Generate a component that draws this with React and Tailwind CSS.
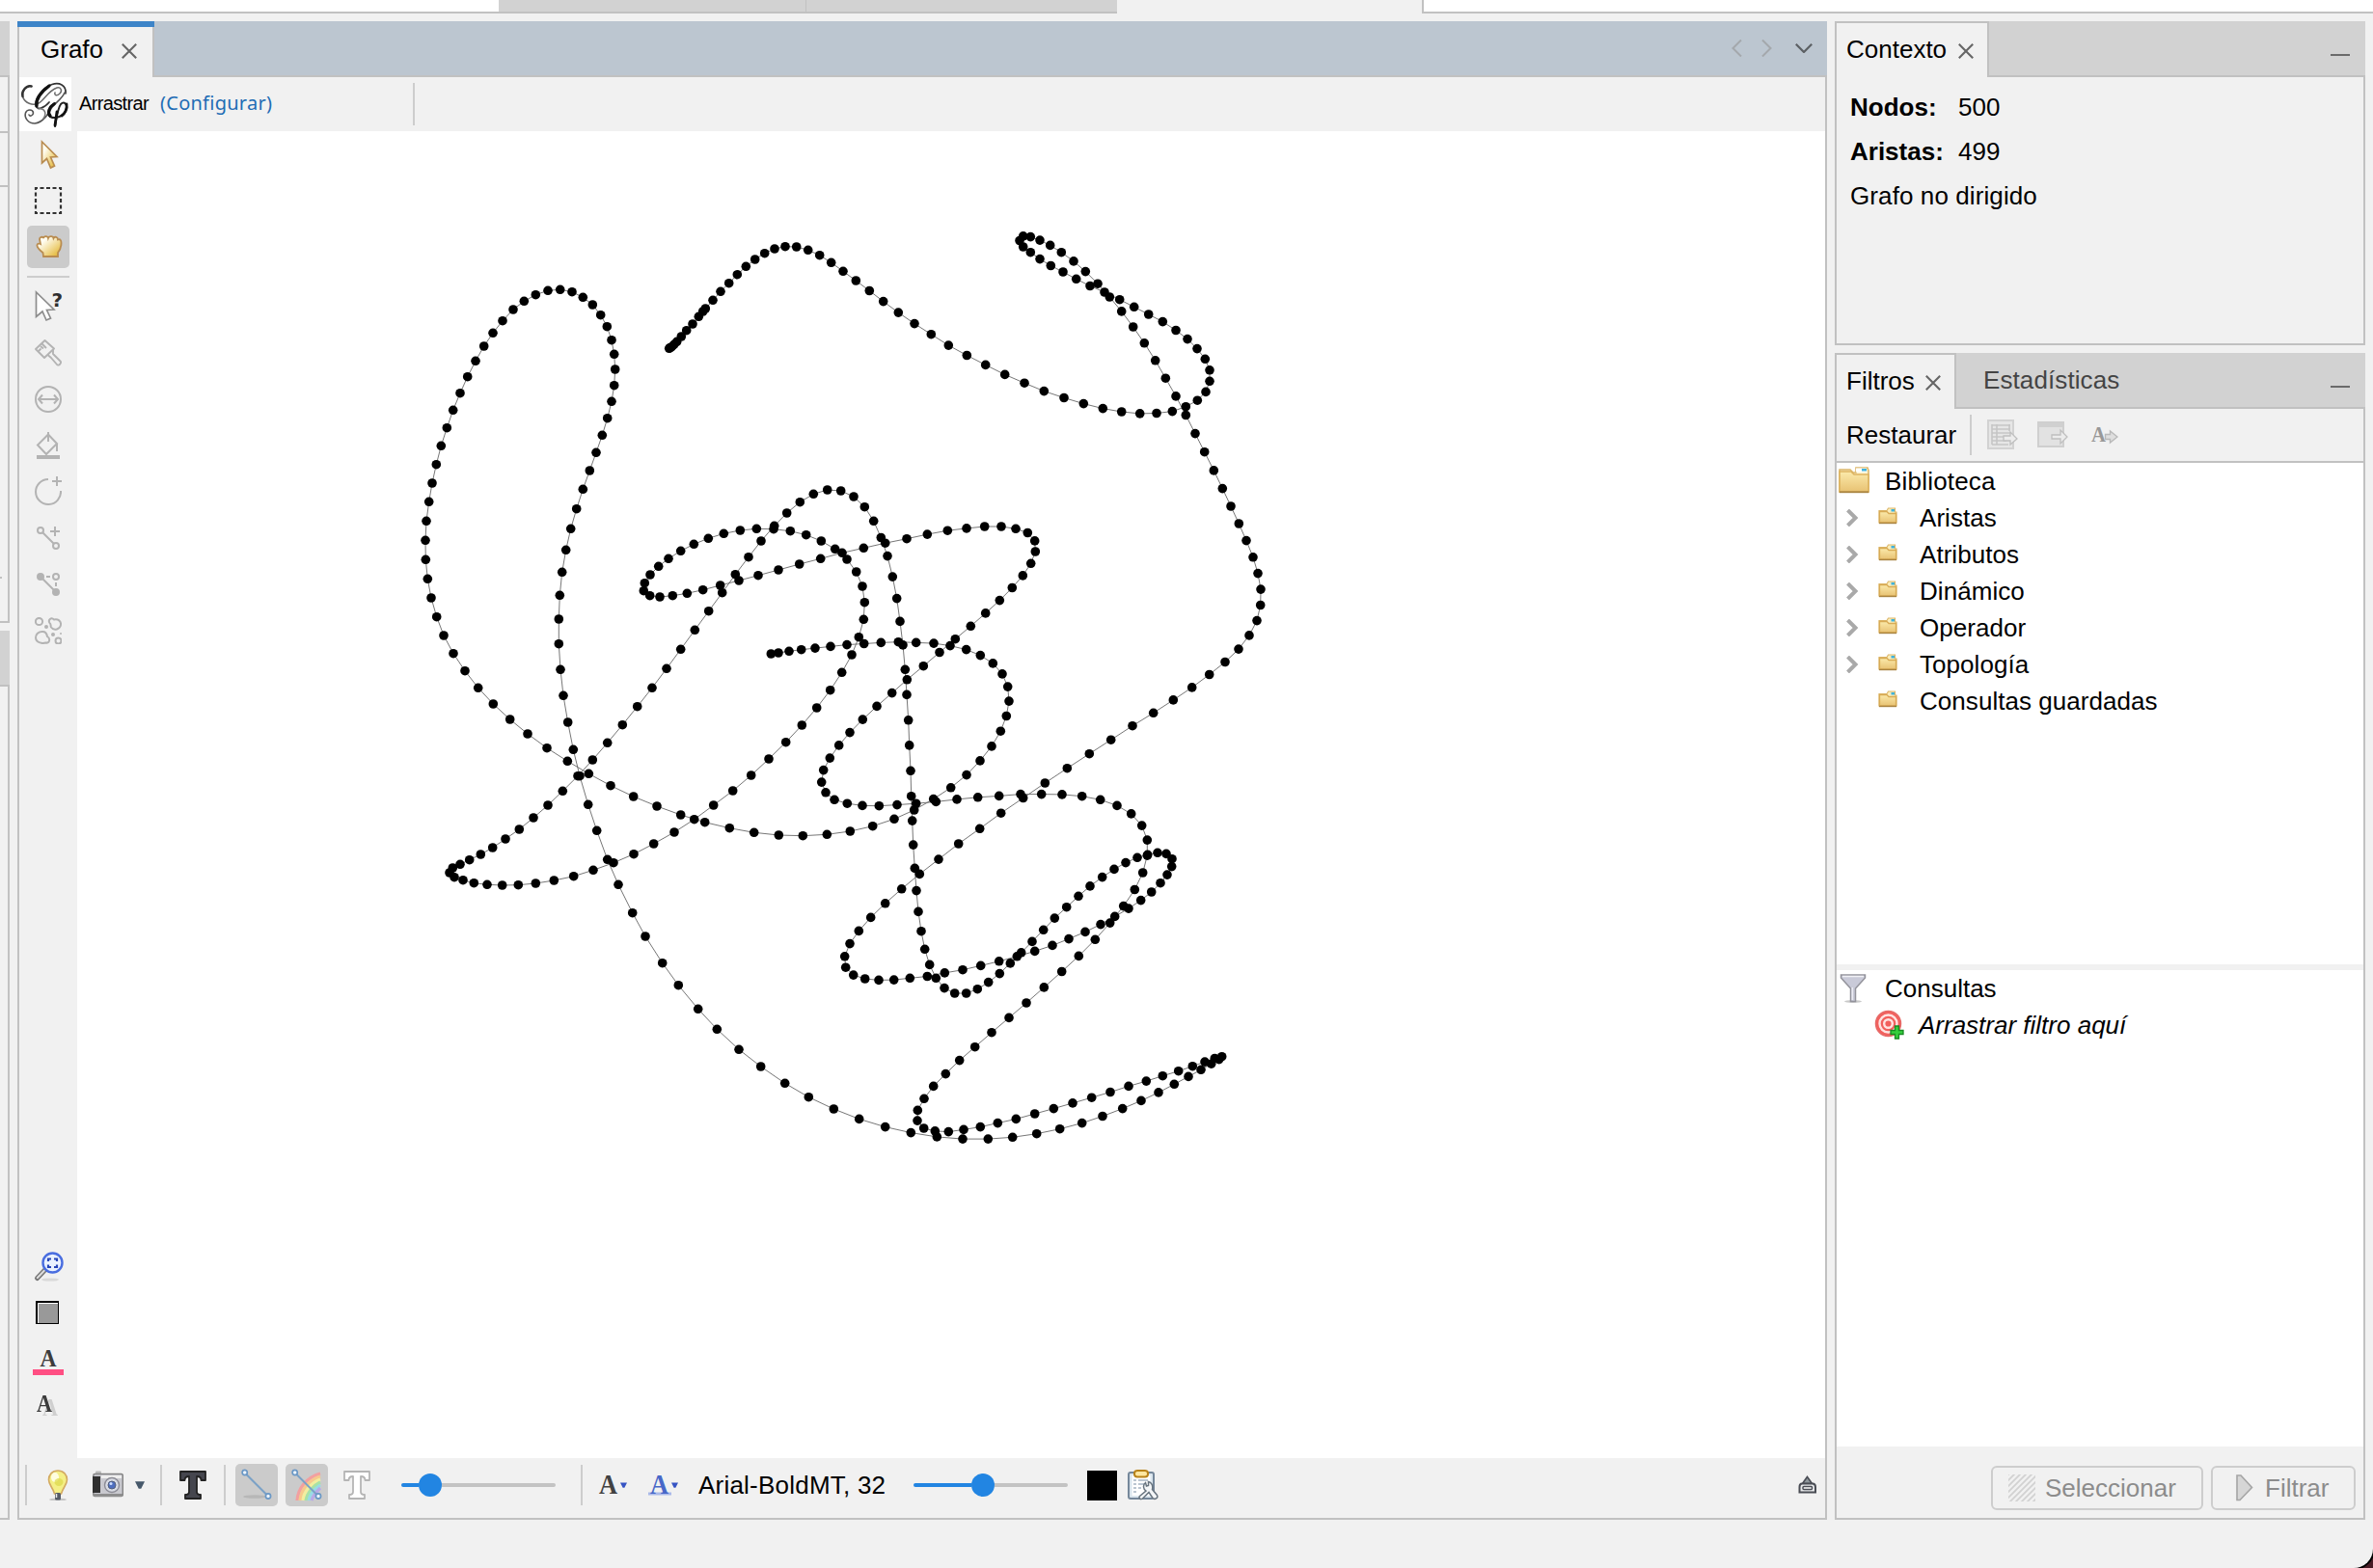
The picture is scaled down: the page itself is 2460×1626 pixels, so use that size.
import React from "react";

/* ---------- graph data: runs of nodes, each in the local units of its tile ---------- */
const TILES = {
  a: { x: 420, y: 220, sx: 3, sy: 3 },
  b: { x: 900, y: 220, sx: 3, sy: 2.6133 },
  c: { x: 420, y: 680, sx: 3, sy: 3 },
  d: { x: 840, y: 640, sx: 3, sy: 2.8 },
};

const RUNS = [
  ["a", "821,424 824,422 829,419 836,412 845,403 859,387 875,368 894,348 913,325 926,309 934,300 957,274 981,247 1007,221 1033,194 1060,169 1088,147 1118,128 1149,114 1182,107 1217,108 1253,118 1289,134 1325,157 1362,184 1402,213"],
  ["b", "4,213 47,242 94,272 144,302 196,331 250,361 307,388 365,414 425,440 486,463 547,485 609,503 670,519 730,532 788,541 845,546 897,545 946,540 988,527 1024,510 1050,487 1062,458 1062,428 1048,398 1023,370 993,344 957,320 916,297 872,277 827,257 782,237 735,217 690,200 647,181 606,162 568,145 534,127 505,109 482,94 471,77 482,65 505,67 534,76 566,90 601,109 639,133 676,161 714,194 751,230 788,269 824,311 859,355 893,402 925,450 957,499 988,550 1017,600 1046,650 1075,700 1102,749 1128,797 1153,844 1176,890 1197,935 1212,979 1221,1022 1220,1065 1209,1107 1185,1147 1152,1184 1110,1219 1061,1253 1007,1288 949,1322 887,1357 822,1392 755,1430 688,1468 619,1507 550,1547"],
  ["d", "662,525 593,569 527,614 461,658 399,703 340,746 284,789 233,831 188,872 151,911 123,948 107,985 110,1017 134,1039 170,1050 213,1054 260,1053 310,1048 364,1043 418,1033 474,1024 530,1012 587,999 643,985 698,970 753,953 804,934 855,914 903,892 947,869 990,846 1028,822 1061,798 1089,772 1110,748 1124,724 1125,702 1107,687 1080,684 1049,690 1017,698 981,713 945,732 908,755 870,781 834,810 797,842 760,874 725,908 690,942 656,974 622,1005 589,1035 554,1060 520,1080 485,1092 449,1092 417,1077 391,1048 371,1009 356,964 345,912 336,855 330,794 325,729 320,661 317,591 314,520 312,446 308,372 305,299 300,225 295,152 288,81"],
  ["b", "99,1109 89,1047 76,988 60,932 40,882 17,837"],
  ["a", "1429,917 1395,885 1355,867 1313,864 1270,877 1228,902 1187,936 1148,976 1107,1023 1068,1073 1027,1127 986,1184 944,1241 901,1300 857,1360 813,1420"],
  ["c", "768,100 722,158 676,215 629,271 583,324 537,374 490,421 444,465 399,504 355,540 312,570 272,597 235,618 200,635 171,649 148,660 138,675 153,689 180,698 214,707 255,712 302,714 352,713 406,708 463,699 524,686 585,667 648,644 711,617 773,585 837,549 899,509 959,465 1019,420 1076,372 1131,321 1184,269 1234,216 1280,162 1322,107 1358,52"],
  ["a", "1389,1377 1411,1322 1426,1267 1429,1214 1422,1164 1403,1119 1374,1080 1337,1048 1294,1023 1247,1004 1198,992 1146,986 1093,985 1042,990 991,1000 943,1015 898,1033 857,1054 819,1078 788,1102 762,1128 745,1154 742,1178 761,1193 792,1197 832,1193 877,1186 926,1175 980,1161 1038,1146 1098,1130 1161,1113 1226,1095 1292,1078 1359,1060 1426,1045"],
  ["b", "53,897 120,885 184,873 247,863 306,857 362,852 414,852 459,858 496,869 518,891 520,920 506,952 481,985 448,1018 409,1052 365,1087 319,1122 271,1157 222,1193 172,1230 121,1267 74,1303 27,1339"],
  ["d", "163,297 123,335 89,372 61,409 41,444 35,479 48,509 75,530 115,541 162,547 214,548 270,545 329,541 391,536 456,529 521,523 587,519 654,514 719,514 783,515 845,520 902,530 954,547 998,571 1031,605 1048,647 1048,692 1034,742 1009,791 974,839 932,888 886,936 835,984 782,1029 727,1075 672,1120 618,1163 564,1206 512,1248 464,1287 421,1326 383,1362 354,1398 334,1432 333,1462 353,1484 388,1492 430,1494 477,1488 529,1480 583,1469 640,1457 698,1442 757,1427 816,1411 875,1395 933,1379 990,1362 1045,1347 1096,1332 1145,1318 1189,1304 1227,1291 1258,1281 1280,1276 1271,1284 1247,1297 1215,1314 1176,1334 1132,1356 1083,1380 1029,1404 971,1427 909,1449 845,1469 776,1486 704,1500 629,1510 553,1515 474,1515 394,1509 313,1497 233,1480 152,1457 73,1428"],
  ["c", "1255,1373 1181,1330 1106,1278 1038,1225 970,1162 911,1099 850,1025 800,956 747,873 707,800 663,712 629,634 596,544 569,463 543,374 523,292 506,207 492,124 483,43"],
  ["a", "478,1343 478,1266 481,1192 488,1120 500,1051 515,985 533,923 553,862 574,804 594,748 613,694 629,641 642,589 650,539 653,489 650,442 642,398 628,356 608,320 583,288 553,265 519,248 482,241 444,244 406,257 370,277 336,303 303,338 273,376 245,417 219,463 194,512 171,563 149,616 130,671 112,727 97,785 84,843 74,901 66,961 63,1021 64,1081 70,1141 81,1200 98,1259 120,1317 150,1373 186,1427"],
  ["c", "227,100 274,150 326,198 381,243 441,287 505,328 571,367 639,404 710,438 783,468 857,495 932,518 1009,536 1085,550 1162,558 1237,560 1312,556 1384,546 1454,530 1521,508"],
  ["d", "323,560 383,528 437,495 486,458 528,417 564,375 592,331 610,287 618,244 614,202 597,165 568,134 529,111 485,94 435,83 384,76 329,74 274,72 220,74 167,77 114,80 63,85 15,90"],
  ["a", "1232,1361 1194,1366 1161,1371 1138,1374"],
];

const NODES = RUNS.flatMap(([key, run]) => {
  const t = TILES[key];
  return run.split(" ").map((p) => {
    const [x, y] = p.split(",").map(Number);
    return [t.x + x / t.sx, t.y + y / t.sy];
  });
});

function GraphCanvas() {
  return (
    <svg viewBox="80 136 1812 1376" className="block h-[1376px] w-[1812px] bg-white">
      <polyline
        points={NODES.map(([x, y]) => `${x.toFixed(1)},${y.toFixed(1)}`).join(" ")}
        fill="none"
        stroke="#666"
        strokeWidth="0.9"
      />
      {NODES.map(([x, y], i) => (
        <circle key={i} cx={x.toFixed(1)} cy={y.toFixed(1)} r="4.8" fill="#000" />
      ))}
    </svg>
  );
}

/* ---------- small drawings ---------- */
function Icon({ w = 32, h = 32, className = "", children, box }) {
  return (
    <svg width={w} height={h} viewBox={box || `0 0 ${w} ${h}`} className={"block shrink-0 " + className} fill="none">
      {children}
    </svg>
  );
}

const CloseX = ({ className = "" }) => (
  <Icon w={16} h={16} className={className}>
    <path d="M0.8 0.8 15.2 15.2M15.2 0.8 0.8 15.2" stroke="#666" strokeWidth="2.1" />
  </Icon>
);

const Minimize = () => <div className="h-[2px] w-[20px] bg-[#6a6a6a]" />;

const Logo = () => (
  <Icon w={54} h={56}>
    <g strokeLinecap="round" fill="none">
      <path d="M13 9.500C7 8 2 15 3.500 20C5.500 27 14 30 20 27C26 24 30 14 39 11C43 10 45 14 42 17C39 20 36 19 37 16" stroke="#6a6a6a" strokeWidth="1.500" />
      <path d="M12.500 9.500C7 8 2 15 3.500 20" stroke="#333" strokeWidth="2.400" />
      <path d="M48 17C49 8 41 5 34 7.500C24 11 16 22 17 29C18 35 26 32 31 26" stroke="#333" strokeWidth="1.700" />
      <path d="M31 9C23 15 17 23 18 30" stroke="#111" strokeWidth="3.200" />
      <path d="M47 16C44 23 38 26 34 31C30 38 25 47 16 48C9 48 5 42 6.500 37C8 33 14 33 14.500 37C14.500 40 11 41 10 39" stroke="#555" strokeWidth="1.600" />
      <path d="M20 33C26 32 29 37 25 43" stroke="#777" strokeWidth="1.500" />
      <path d="M37 27C31 30 28 38 32 41C38 44 47 40 49 33C50 27 46 25 43 28C40 32 39 40 37 51" stroke="#222" strokeWidth="2" />
      <path d="M36 28C31 31 29 37 32 40" stroke="#111" strokeWidth="3.200" />
      <path d="M49 28C50 33 47 38 44 40M39 36L37 50" stroke="#111" strokeWidth="2.800" />
    </g>
  </Icon>
);

const Pointer = () => (
  <Icon w={32} h={32} className="ml-px">
    <defs>
      <linearGradient id="gold" x1="0" y1="0" x2="1" y2="1">
        <stop offset="0.25" stopColor="#fffdf2" />
        <stop offset="1" stopColor="#e0ae1c" />
      </linearGradient>
    </defs>
    <path d="M8.5 3V25L13.5 20.5L17.5 30L21.5 28L17.5 19L24 18.5Z" fill="url(#gold)" stroke="#b98c50" strokeWidth="1.7" />
  </Icon>
);

const Marquee = () => (
  <Icon w={30} h={30}>
    <rect x="2" y="2" width="26" height="26" stroke="#333" strokeWidth="2.2" strokeDasharray="4 2.5" strokeDashoffset="2" />
  </Icon>
);

const Hand = () => (
  <Icon w={32} h={32} className="ml-[2px]">
    <path d="M10 26L9.5 22C7 20 3 17 3.5 14C4 12 6 12.500 7 13L6 8C6 5.500 9.500 5 10 7C10.500 4.500 14.500 4.500 15 7C16 4.500 20 4.500 20.500 7C21.500 5 25 5.500 25 8.500C28 7.500 28.500 10 28.500 12C28.500 16 27.500 19 25 22V26Z" fill="url(#gold)" stroke="#b98c50" strokeWidth="1.8" />
  </Icon>
);

const Help = () => (
  <Icon w={32} h={36} className="-mt-[4px]">
    <path d="M3.500 5V30.500L10 25L14 34L18.500 32L14.500 23.500L22 23Z" fill="#fff" stroke="#8d8d8d" strokeWidth="1.700" />
    <text x="19.500" y="20" fontFamily="DejaVu Sans" fontWeight="700" fontSize="20" fill="#2f2f2f">?</text>
  </Icon>
);

const Brush = () => (
  <Icon w={28} h={28}>
    <g stroke="#b3b3b3" strokeWidth="1.9" strokeLinejoin="round">
      <path d="M1 10L10.500 1L20 9.500L10 19Z" />
      <path d="M3.500 12.500L6.500 9.500M6 7L9 9.500M7.500 4.500L12 9M13.500 16L17 19L23 26C24.500 28 28.500 24.500 26.500 22.500L19 15V10" />
    </g>
  </Icon>
);

const Sizer = () => (
  <Icon w={28} h={28}>
    <circle cx="14" cy="14" r="13" stroke="#b3b3b3" strokeWidth="2" />
    <path d="M4.500 14H23.500M8 9.500L4 14L8 18.500M20 9.500L24 14L20 18.500" stroke="#b3b3b3" strokeWidth="2" />
  </Icon>
);

const Bucket = () => (
  <Icon w={28} h={28}>
    <path d="M14 2.500L23 12L12 23L3 13.500Z" stroke="#b3b3b3" strokeWidth="2" />
    <path d="M14 0V10M23 12V20" stroke="#b3b3b3" strokeWidth="2" />
    <rect x="2" y="24" width="24" height="4" fill="#b3b3b3" />
  </Icon>
);

const NodeAdd = () => (
  <Icon w={28} h={30} className="-mt-[2px]">
    <path d="M14 3A13 13 0 1 0 27 15" stroke="#b3b3b3" strokeWidth="2" />
    <path d="M23 0V10M18 5H28" stroke="#b3b3b3" strokeWidth="2" />
  </Icon>
);

const EdgeAdd = () => (
  <Icon w={24} h={24}>
    <g stroke="#b3b3b3" strokeWidth="2">
      <circle cx="4" cy="4" r="3" />
      <circle cx="20" cy="20" r="3" />
      <path d="M6 6L18 18M19 0V10M14 5H24" />
    </g>
  </Icon>
);

const PathTool = () => (
  <Icon w={24} h={24}>
    <g stroke="#b3b3b3" strokeWidth="2">
      <circle cx="4" cy="4" r="3" fill="#b3b3b3" />
      <circle cx="20" cy="20" r="3" fill="#b3b3b3" />
      <circle cx="20" cy="4" r="3" />
      <path d="M6 6L18 18M10 4H14M20 10V14" />
    </g>
  </Icon>
);

const Heatmap = () => (
  <Icon w={28} h={28}>
    <g stroke="#b3b3b3" strokeWidth="2">
      <circle cx="4.500" cy="4.500" r="3.600" />
      <circle cx="24.500" cy="24.500" r="3" />
      <path d="M15.500 6C13.500 3 17 -0.500 20 2.500C24 1.500 27.500 4 27 8C26.500 12.500 20 14.500 17 10.500C16 9 17.500 7.500 15.500 6Z" />
      <path d="M7 15C10.500 14.500 12.500 16.500 13 20C16.500 22 15.500 27.500 11.500 26.500C7 28 1 26 1 21C1 18 3.500 15.300 7 15Z" />
    </g>
    <circle cx="12" cy="10" r="2" fill="#b3b3b3" />
    <circle cx="19" cy="18" r="2" fill="#b3b3b3" />
    <circle cx="27" cy="17" r="1" fill="#b3b3b3" />
  </Icon>
);

const ZoomFit = () => (
  <Icon w={32} h={34} className="mt-[3px]">
    <ellipse cx="18" cy="30" rx="9" ry="1.600" fill="#d9d9d9" />
    <path d="M12.500 20L4.500 28.500" stroke="#777" strokeWidth="5" strokeLinecap="round" />
    <path d="M12 20.500L4.800 28" stroke="#dcdcdc" strokeWidth="2" strokeLinecap="round" />
    <circle cx="20.500" cy="12.500" r="10" fill="#eaf2ff" stroke="#4a6ee0" strokeWidth="2.400" />
    <path d="M16 11V8.500H19M22 8.500H25V11M25 14.500V17H22M19 17H16V14.500" stroke="#2846b8" strokeWidth="2.200" />
  </Icon>
);

const BgSquare = () => (
  <Icon w={24} h={24} className="mr-[2px] mt-[2px]">
    <rect x="0" y="0" width="24" height="24" fill="#000" />
    <rect x="2" y="2" width="21" height="21" fill="#fff" />
    <rect x="3" y="3" width="20" height="20" fill="#999" />
  </Icon>
);

const Letter = ({ x, y, size, fill, children, ...rest }) => (
  <text x={x} y={y} fontFamily="Liberation Serif" fontWeight="700" fontSize={size} fill={fill} {...rest}>{children}</text>
);

const LabelColor = () => (
  <Icon w={32} h={36}>
    <Letter x="7.500" y="27" size="26" fill="#3c3c3c" textLength="17" lengthAdjust="spacingAndGlyphs">A</Letter>
    <rect x="0" y="30" width="32" height="6" fill="#ff4f83" />
  </Icon>
);

const LabelShadow = () => (
  <Icon w={32} h={36}>
    <Letter x="4" y="26" size="25" fill="#3c3c3c" textLength="16" lengthAdjust="spacingAndGlyphs" className="drop-shadow-[6px_4px_0_#cfcfcf]">A</Letter>
  </Icon>
);

const Bulb = () => (
  <Icon w={32} h={32}>
    <ellipse cx="16" cy="31" rx="9" ry="1.500" fill="#c4c4c4" />
    <path d="M16 1C10 1 6.500 5.500 6.500 10.500C6.500 15.500 10.500 18 12.500 25H19.500C21.500 18 25.500 15.500 25.500 10.500C25.500 5.500 22 1 16 1Z" fill="#f4ef86" stroke="#d3aa62" strokeWidth="1.600" />
    <ellipse cx="13" cy="8" rx="4" ry="5" fill="#fffde0" />
    <ellipse cx="17" cy="13" rx="4.500" ry="4" fill="#dcd94a" opacity=".7" />
    <rect x="13" y="24" width="6" height="7.500" rx="1.500" fill="#555b66" />
    <path d="M14.500 25V29" stroke="#e8e8e8" strokeWidth="1.500" />
  </Icon>
);

const Camera = () => (
  <Icon w={32} h={32}>
    <rect x="3" y="1.500" width="6" height="4" rx="1" fill="#bbb" />
    <rect x="0.800" y="4.500" width="30.500" height="23" rx="1.500" fill="#c9c9cf" stroke="#868686" strokeWidth="1.500" />
    <rect x="0" y="7" width="8" height="17" fill="#303030" />
    <rect x="9" y="6" width="21" height="3" fill="#eee" />
    <circle cx="20" cy="16" r="7.500" fill="#d9dce4" stroke="#8c8c96" strokeWidth="1.400" />
    <circle cx="20" cy="16" r="4" fill="#4f6fc0" stroke="#55607a" strokeWidth="1" />
    <circle cx="19" cy="14.500" r="1.500" fill="#cfe0ff" />
    <rect x="1" y="25" width="30" height="3" fill="#8e8e8e" />
  </Icon>
);

const BigT = ({ fill, stroke }) => (
  <Icon w={32} h={32}>
    <path d="M3 2H29V11H24.500C24.500 8 23 7 20 7V23C20 25.500 22 26 24 26V30H8V26C10 26 12 25.500 12 23V7C9 7 7.500 8 7.500 11H3Z" fill={fill} stroke={stroke} strokeWidth="1.800" strokeLinejoin="round" />
  </Icon>
);

const EdgeIcon = ({ rainbow }) => (
  <Icon w={32} h={34}>
    {rainbow ? (
      <g strokeWidth="3.200">
        <path d="M6 33C7 20 16 9 30 5" stroke="#f2a0a0" />
        <path d="M9 33C10 22 18 12 30 8" stroke="#f7c98c" />
        <path d="M12 33C13 24 20 15 30 11" stroke="#f3ee9e" />
        <path d="M15 33C16 26 22 18 30 14" stroke="#a8e3a4" />
        <path d="M18 33C19 27 24 21 30 17" stroke="#98dbe6" />
        <path d="M21 33C22 29 26 24 30 20" stroke="#b9a9e6" />
      </g>
    ) : (
      <ellipse cx="14" cy="29" rx="12" ry="1.800" fill="#b7b7b7" />
    )}
    <path d="M4 4.500L28 28.500" stroke="#7ba1c6" strokeWidth="2" />
    <circle cx="3.700" cy="4" r="2.600" fill="#eef5fb" stroke="#6b98c6" strokeWidth="1.700" />
    <circle cx="28" cy="28.500" r="2.600" fill="#eef5fb" stroke="#6b98c6" strokeWidth="1.700" />
  </Icon>
);

const Caret = ({ color, w = 8, h = 6 }) => (
  <Icon w={w} h={h} box="0 0 8 6">
    <path d="M0 0H8L5 6H3Z" fill={color} />
  </Icon>
);

const FontA = ({ color, halo }) => (
  <Icon w={24} h={40} box="0 -8 24 40">
    {halo && <rect x="0" y="19.500" width="24" height="3" fill="#a9b9ea" />}
    <Letter x="2" y="21" size="29" fill={color} textLength="19" lengthAdjust="spacingAndGlyphs">A</Letter>
  </Icon>
);

const Clipboard = () => (
  <Icon w={32} h={32}>
    <rect x="1" y="3" width="26" height="27" rx="2" fill="#dbe6ee" stroke="#75879a" strokeWidth="2" />
    <rect x="4.500" y="6" width="19" height="21" fill="#fff" />
    <path d="M6 11H9M6 15H9M6 19H9M6 23H9M11 11H21M11 15H17M11 19H14" stroke="#a5b4c2" strokeWidth="1.600" />
    <rect x="7" y="1" width="14" height="6.500" rx="3" fill="#ffe7a0" stroke="#b98319" strokeWidth="2" />
    <path d="M18.500 13.500C15.500 16 16 20 19 22L12.500 27.500C11 29.500 13.500 31.500 15.500 30L22 23.500L26 29.500C28 31.500 32 29.500 30.500 26.500L25.500 20.500C26.500 16.500 24.500 13 21.500 12.500V16.500L19.500 17Z" fill="#f4f6f8" stroke="#68747f" strokeWidth="1.500" />
  </Icon>
);

const Eject = () => (
  <Icon w={20} h={20}>
    <path d="M9.500 1.500L14.500 8.500H4.500Z" fill="#8e979c" stroke="#4a4d55" strokeWidth="1.600" />
    <path d="M4 8.500H15C17.500 8.500 18 10 18 12V17.500H1.500V12C1.500 10 2 8.500 4 8.500Z" fill="#e6e8ea" stroke="#4a4d55" strokeWidth="2" />
    <rect x="5" y="11.500" width="9.500" height="3" rx="1" fill="#fff" stroke="#4a4d55" strokeWidth="1.500" />
  </Icon>
);

const FolderShape = () => (
  <g>
    <defs>
      <linearGradient id="folder" x1="0" y1="0" x2="0" y2="1">
        <stop offset="0" stopColor="#fbeaab" />
        <stop offset="1" stopColor="#e8c273" />
      </linearGradient>
    </defs>
    <path d="M1 3H12L15 6H18V1H30L31 4V26H1Z" fill="#fdf3cf" stroke="#dcb76a" strokeWidth="1.600" />
    <rect x="18" y="1.500" width="11" height="4" fill="#fff" />
    <rect x="24" y="2" width="5" height="2.500" fill="#3fb2dc" />
    <path d="M1 5H13L16 8H31V26H1Z" fill="url(#folder)" stroke="#ddb35f" strokeWidth="1.600" />
    <path d="M1 26.300H31" stroke="#a98442" strokeWidth="1.800" />
  </g>
);

const BigFolder = () => <Icon w={32} h={28} className="-mt-[2px]"><FolderShape /></Icon>;
const SmallFolder = () => (
  <Icon w={20} h={18} className="-mt-[3px]">
    <path d="M1 3.500H9L10.500 1H17.500V5H19V16H1Z" fill="#fbeebb" stroke="#dcb76a" strokeWidth="1.200" />
    <rect x="13.500" y="2" width="3.500" height="2.500" fill="#3fb2dc" />
    <path d="M1.500 4.500H9L11 6.500H18.500V16H1.500Z" fill="url(#folder)" stroke="#d8ab55" strokeWidth="1.300" />
    <path d="M1 16.500H19" stroke="#a98442" strokeWidth="1.400" />
  </Icon>
);

const Chevron = () => (
  <Icon w={13} h={18}>
    <path d="M1.500 1L9.500 9L1.500 17" stroke="#a9a9a9" strokeWidth="4" />
  </Icon>
);

const Funnel = () => (
  <Icon w={28} h={32}>
    <ellipse cx="14" cy="29.500" rx="9" ry="1.500" fill="#c9c9c9" />
    <path d="M1.500 2H26.500V5L16.500 16V29.500H11.500V16L1.500 5Z" fill="#c9cad8" stroke="#93939b" strokeWidth="1.500" />
    <path d="M3 3.500H25" stroke="#f1f1f5" strokeWidth="1.500" />
    <path d="M13.300 15V28" stroke="#ececf4" strokeWidth="1.500" />
  </Icon>
);

const Target = () => (
  <Icon w={32} h={32}>
    <circle cx="14.500" cy="14.500" r="13" fill="#f2605d" stroke="#e66a68" strokeWidth="1.500" />
    <circle cx="14.500" cy="14.500" r="9" stroke="#ffe4e2" strokeWidth="2.400" />
    <circle cx="14.500" cy="14.500" r="4.300" stroke="#ffe4e2" strokeWidth="2.400" />
    <path d="M21.500 17H25.500V21.500H30V25.500H25.500V30H21.500V25.500H17V21.500H21.500Z" fill="#35cf3d" stroke="#188a22" strokeWidth="1.300" />
  </Icon>
);

const ExportSheet = () => (
  <Icon w={32} h={32}>
    <rect x="1" y="1" width="26" height="29" fill="#e6e6e6" stroke="#d2d2d2" strokeWidth="2" />
    <path d="M5 6H24M5 10H24M5 14H24M5 18H20M5 22H20M5 26H22M5 5V26M10 5V26M23 5V12" stroke="#c6c6c6" strokeWidth="1.600" />
    <path d="M17 17H24V13L31 20L24 26V22H17Z" fill="#ececec" stroke="#bfbfbf" strokeWidth="1.300" />
  </Icon>
);

const ExportWindow = () => (
  <Icon w={32} h={32}>
    <rect x="1" y="3" width="26" height="25" fill="#e2e2e2" stroke="#cfcfcf" strokeWidth="2" />
    <rect x="2" y="4" width="24" height="4" fill="#d0d0d0" />
    <path d="M15 16H24V11L31 18L24 25V20H15Z" fill="#ececec" stroke="#bfbfbf" strokeWidth="1.300" />
  </Icon>
);

const ExportLabel = () => (
  <Icon w={32} h={32}>
    <Letter x="4" y="22.500" size="24" fill="#989898" textLength="15" lengthAdjust="spacingAndGlyphs">A</Letter>
    <path d="M18.500 15.500H23.500V12L31 18L23.500 24V20.500H18.500Z" fill="#dedede" stroke="#b9b9b9" strokeWidth="1.400" />
  </Icon>
);

const Hatch = () => (
  <Icon w={28} h={28}>
    <defs>
      <pattern id="hatch" width="6" height="6" patternUnits="userSpaceOnUse">
        <path d="M-1 7L7 -1M-1 1L1 -1M5 7L7 5" stroke="#d2d2d2" strokeWidth="1.800" />
      </pattern>
    </defs>
    <rect width="28" height="28" fill="url(#hatch)" />
  </Icon>
);

const Play = () => (
  <Icon w={18} h={28}>
    <path d="M1 1L5 1L16.500 13.500L4 26.500H1Z" fill="#d6d6d6" stroke="#a5a5a5" strokeWidth="1.600" />
  </Icon>
);

/* ---------- building blocks ---------- */
const ToolBtn = ({ active, children }) => (
  <div className={"flex h-[44px] w-[44px] shrink-0 items-center justify-center rounded-[5px] " + (active ? "bg-[#cbcbcb]" : "")}>
    {children}
  </div>
);

const VRule = ({ className = "" }) => <div className={"h-[42px] w-[2px] shrink-0 bg-[#cdcdcd] " + className} />;

function Slider({ value, className = "" }) {
  return (
    <div className={"flex h-[24px] w-[160px] shrink-0 items-center " + className}>
      <div className="h-[4px] rounded-l-full bg-[#2285e2]" style={{ width: value - 12 }} />
      <div className="h-[24px] w-[24px] shrink-0 rounded-full bg-[#2285e2]" />
      <div className="h-[4px] flex-1 rounded-r-full bg-[#c3c3c3]" />
    </div>
  );
}

const TreeRow = ({ label, open }) => (
  <div className="flex h-[38px] items-center pb-px pl-[10px]">
    <div className="w-[33px]">{open && <Chevron />}</div>
    <SmallFolder />
    <span className="ml-[23px] tracking-[0.05px]">{label}</span>
  </div>
);

function TopStrip() {
  return (
    <div className="flex h-[14px]">
      <div className="w-[517px] border-b-2 border-[#c1c1c1] bg-white" />
      <div className="w-[318px] border-b-2 border-[#c1c1c1] bg-[#d2d2d2]" />
      <div className="w-[323px] border-b-2 border-l border-[#c1c1c1] bg-[#d2d2d2]" />
      <div className="w-[316px] bg-[#f1f1f1]" />
      <div className="flex-1 border-b-2 border-l-2 border-[#c1c1c1] bg-white" />
    </div>
  );
}

function LeftSliver() {
  return (
    <div className="flex w-[10px] shrink-0 flex-col">
      <div className="h-[56px] bg-[#d2d2d2]" />
      <div className="flex h-[568px] flex-col border-y-2 border-r-2 border-[#c1c1c1]">
        <div className="h-[58px] border-b-2 border-[#c1c1c1]" />
        <div className="h-[56px] border-b-2 border-[#c1c1c1]" />
        <div className="mt-[404px] h-[2px] w-[2px] bg-[#c1c1c1]" />
      </div>
      <div className="mt-[8px] h-[56px] bg-[#d2d2d2]" />
      <div className="flex-1 border-y-2 border-r-2 border-[#c1c1c1]" />
    </div>
  );
}

function GraphPanel() {
  return (
    <div className="ml-[8px] flex w-[1876px] shrink-0 flex-col">
      <div className="flex h-[58px] bg-[#bcc6d0]">
        <div className="flex w-[142px] flex-col">
          <div className="h-[6px] bg-[#3d84c8]" />
          <div className="flex flex-1 items-center border-x-2 border-[#c1c1c1] bg-[#f1f1f1] pb-[6px] pl-[22px]">
            <span className="w-[66px]">Grafo</span>
            <CloseX className="ml-[18px] mt-[4px]" />
          </div>
        </div>
        <div className="flex flex-1 items-center justify-end border-b-2 border-[#c1c1c1] pr-[15px]">
          <Icon w={11} h={18}><path d="M10 0.500L1.500 9L10 17.500" stroke="#a4a8ac" strokeWidth="2" /></Icon>
          <Icon w={11} h={18} className="ml-[20px]"><path d="M1 0.500L9.500 9L1 17.500" stroke="#a4a8ac" strokeWidth="2" /></Icon>
          <Icon w={18} h={10} className="ml-[24px]"><path d="M0.800 0.800L9 9L17.200 0.800" stroke="#5c6064" strokeWidth="2.200" /></Icon>
        </div>
      </div>
      <div className="flex flex-1 flex-col border-x-2 border-b-2 border-[#c1c1c1]">
        <div className="flex h-[56px] items-center">
          <div className="h-[56px] w-[54px] bg-white"><Logo /></div>
          <span className="ml-[8px] w-[84px] pb-[2px] text-[20px] tracking-[-0.65px]">Arrastrar</span>
          <span className="w-[262px] pb-[2px] font-['Noto_Sans'] text-[20px] leading-[24px] tracking-[0.25px] text-[#1f6db5]">(Configurar)</span>
          <div className="h-[44px] w-[2px] bg-[#cdcdcd]" />
        </div>
        <div className="flex h-[1376px]">
          <div className="flex w-[60px] flex-col items-center gap-[4px] pt-[2px]">
            <ToolBtn><Pointer /></ToolBtn>
            <ToolBtn><Marquee /></ToolBtn>
            <ToolBtn active><Hand /></ToolBtn>
            <div className="my-[4px] h-[2px] w-[44px] shrink-0 bg-[#cdcdcd]" />
            <ToolBtn><Help /></ToolBtn>
            <ToolBtn><Brush /></ToolBtn>
            <ToolBtn><Sizer /></ToolBtn>
            <ToolBtn><Bucket /></ToolBtn>
            <ToolBtn><NodeAdd /></ToolBtn>
            <ToolBtn><EdgeAdd /></ToolBtn>
            <ToolBtn><PathTool /></ToolBtn>
            <ToolBtn><Heatmap /></ToolBtn>
            <div className="mt-auto flex flex-col items-center gap-[4px] pb-[34px]">
              <ToolBtn><ZoomFit /></ToolBtn>
              <ToolBtn><BgSquare /></ToolBtn>
              <ToolBtn><LabelColor /></ToolBtn>
              <ToolBtn><LabelShadow /></ToolBtn>
            </div>
          </div>
          <GraphCanvas />
        </div>
        <div className="flex h-[56px] items-center">
          <VRule className="ml-[6px]" />
          <div className="ml-[16px]"><Bulb /></div>
          <div className="ml-[20px]"><Camera /></div>
          <div className="ml-[12px]"><Caret color="#46586a" w={10} h={8} /></div>
          <VRule className="ml-[16px]" />
          <div className="ml-[16px]"><BigT fill="#45464e" stroke="#222" /></div>
          <VRule className="ml-[16px]" />
          <div className="ml-[10px] flex gap-[8px]">
            <ToolBtn active><EdgeIcon /></ToolBtn>
            <ToolBtn active><EdgeIcon rainbow /></ToolBtn>
          </div>
          <div className="ml-[14px]"><BigT fill="#fff" stroke="#b5b5b5" /></div>
          <Slider value={30} className="ml-[30px]" />
          <VRule className="ml-[26px]" />
          <div className="ml-[15px]"><FontA color="#424242" /></div>
          <Caret color="#3654c4" w={7} h={6} />
          <div className="ml-[22px]"><FontA color="#4868c8" halo /></div>
          <Caret color="#3654c4" w={7} h={6} />
          <span className="ml-[21px] w-[196px] whitespace-nowrap tracking-[0.22px]">Arial-BoldMT, 32</span>
          <Slider value={72} className="ml-[27px]" />
          <div className="ml-[20px] h-[31px] w-[31px] bg-black" />
          <div className="ml-[11px]"><Clipboard /></div>
          <div className="ml-auto mr-[8px]"><Eject /></div>
        </div>
      </div>
    </div>
  );
}

function ContextPanel() {
  return (
    <div className="flex h-[336px] flex-col">
      <div className="flex h-[58px] bg-[#d2d2d2]">
        <div className="flex w-[160px] items-center border-x-2 border-t-2 border-[#c1c1c1] bg-[#f1f1f1] pb-[2px] pl-[10px]">
          <span className="w-[105px]">Contexto</span>
          <CloseX className="ml-[11px] mt-[3px]" />
        </div>
        <div className="flex flex-1 items-center justify-end border-b-2 border-[#c1c1c1] pr-[16px] pt-[14px]"><Minimize /></div>
      </div>
      <div className="flex flex-1 flex-col border-x-2 border-b-2 border-[#c1c1c1] pl-[14px] pt-[8px] leading-[46px]">
        <div className="flex"><span className="w-[112px] font-bold">Nodos:</span><span>500</span></div>
        <div className="flex"><span className="w-[112px] font-bold">Aristas:</span><span>499</span></div>
        <div className="tracking-[0.1px]">Grafo no dirigido</div>
      </div>
    </div>
  );
}

function FiltersPanel() {
  return (
    <div className="mt-[8px] flex flex-1 flex-col">
      <div className="flex h-[58px] bg-[#d2d2d2]">
        <div className="flex w-[126px] items-center border-x-2 border-t-2 border-[#c1c1c1] bg-[#f1f1f1] pb-[2px] pl-[10px]">
          <span className="w-[70px]">Filtros</span>
          <CloseX className="ml-[12px] mt-[3px]" />
        </div>
        <div className="flex flex-1 items-center border-b-2 border-[#c1c1c1] pl-[28px] pr-[16px] text-[#444]">
          <span className="tracking-[0.1px]">Estadísticas</span>
          <div className="ml-auto pt-[14px]"><Minimize /></div>
        </div>
      </div>
      <div className="flex flex-1 flex-col border-x-2 border-b-2 border-[#c1c1c1]">
        <div className="flex h-[56px] items-center border-b-2 border-[#c1c1c1] pb-px pl-[10px]">
          <span className="w-[128px]">Restaurar</span>
          <VRule />
          <div className="ml-[16px]"><ExportSheet /></div>
          <div className="ml-[20px]"><ExportWindow /></div>
          <div className="ml-[20px]"><ExportLabel /></div>
        </div>
        <div className="h-[520px] bg-white">
          <div className="flex h-[38px] items-center pb-px pl-[2px]">
            <BigFolder />
            <span className="ml-[16px] tracking-[0.2px]">Biblioteca</span>
          </div>
          <TreeRow label="Aristas" open />
          <TreeRow label="Atributos" open />
          <TreeRow label="Dinámico" open />
          <TreeRow label="Operador" open />
          <TreeRow label="Topología" open />
          <TreeRow label="Consultas guardadas" />
        </div>
        <div className="mt-[6px] h-[494px] bg-white">
          <div className="flex h-[38px] items-center pb-px pl-[3px]">
            <Funnel />
            <span className="ml-[19px]">Consultas</span>
          </div>
          <div className="flex h-[38px] items-center pb-px pl-[39px]">
            <Target />
            <span className="ml-[14px] italic">Arrastrar filtro aquí</span>
          </div>
        </div>
        <div className="flex flex-1 justify-end gap-[8px] pr-[8px] pt-[20px] text-[#8c8c8c]">
          <div className="flex h-[46px] w-[220px] items-center rounded-[6px] border-2 border-[#cdcdcd] pl-[16px]">
            <Hatch />
            <span className="ml-[10px]">Seleccionar</span>
          </div>
          <div className="flex h-[46px] w-[150px] items-center rounded-[6px] border-2 border-[#cdcdcd] pl-[24px]">
            <Play />
            <span className="ml-[12px]">Filtrar</span>
          </div>
        </div>
      </div>
    </div>
  );
}

export default function App() {
  return (
    <div className="h-[1626px] w-[2460px] overflow-hidden bg-[#4a1c26]">
      <div className="flex h-full flex-col rounded-br-[20px] bg-[#f1f1f1] font-['Liberation_Sans',sans-serif] text-[26px] leading-[30px] text-black shadow-[0_0_0_2px_#000]">
        <TopStrip />
        <div className="mt-[8px] flex h-[1554px]">
          <LeftSliver />
          <GraphPanel />
          <div className="ml-[8px] flex w-[550px] flex-col">
            <ContextPanel />
            <FiltersPanel />
          </div>
        </div>
      </div>
    </div>
  );
}
